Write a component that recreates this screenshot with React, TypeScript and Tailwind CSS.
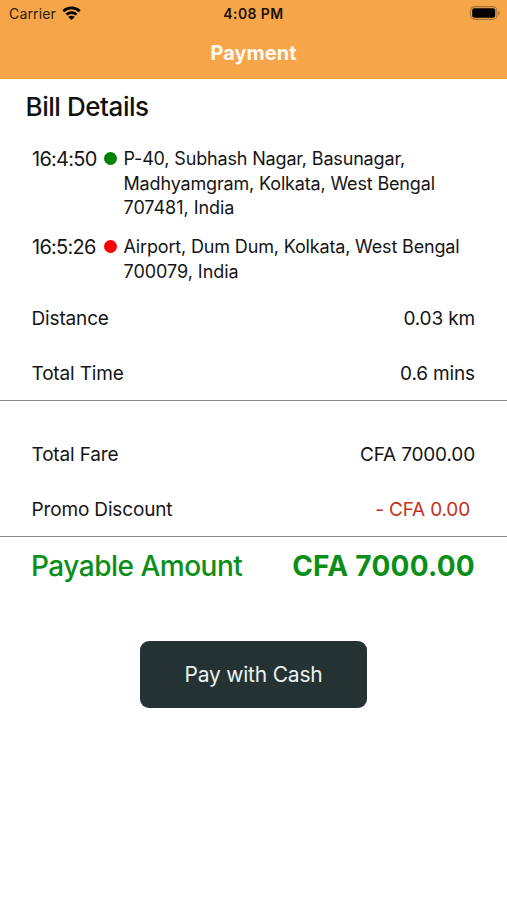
import React from "react";

function StatusBar() {
  return (
    <div className="grid h-7 grid-cols-3 items-center pl-[9px] pr-[7px] text-black">
      <div className="flex items-center gap-[6px]">
        <span className="text-[14px] leading-7 tracking-[0.15px] text-[#2b1c0b]">Carrier</span>
        <svg className="-mt-[2px]" width="19" height="14" viewBox="0 0 19 14" fill="none" stroke="currentColor" strokeWidth="2.7">
          <path d="M1.3 5.2C5.8.7 13.2.7 17.7 5.2" />
          <path d="M4.4 8.5c2.8-2.6 7.4-2.6 10.2 0" />
          <path d="M9.5 14 6.3 10.9c1.8-1.5 4.6-1.5 6.4 0Z" fill="currentColor" stroke="none" />
        </svg>
      </div>
      <span className="-ml-[2px] text-center text-[14px] font-semibold leading-7 tracking-[0.4px] text-[#1a1006]">4:08 PM</span>
      <svg className="-mt-[2px] justify-self-end" width="30" height="14" viewBox="0 0 30 14">
        <rect x="0.6" y="0.6" width="26.3" height="12.8" rx="4" fill="none" stroke="#a87135" strokeWidth="1.1" />
        <rect x="2.2" y="2.2" width="23" height="9.6" rx="2" fill="#000" />
        <path d="M28.2 4.7c2.2.8 2.2 3.8 0 4.6Z" fill="#a87135" />
      </svg>
    </div>
  );
}

type StopProps = { time: string; dot: string; street: string[]; postal: string };

function Stop({ time, dot, street, postal }: StopProps) {
  return (
    <div className="flex text-[18px] leading-[24.5px] tracking-[-0.16px] text-[#151515]">
      <span className="w-[72px] whitespace-nowrap text-[20px] leading-[24px] tracking-[-0.75px]">{time}</span>
      <span className={`mt-[5px] mr-[7px] size-[13px] shrink-0 rounded-full ${dot}`} />
      <div className="-ml-[0.5px] whitespace-nowrap">
        {street.map((line) => (
          <div key={line}>{line}</div>
        ))}
        <div className="tracking-[-0.03px]">{postal}</div>
      </div>
    </div>
  );
}

type RowProps = { label: string; value: string; valueClass?: string };

function Row({ label, value, valueClass = "" }: RowProps) {
  return (
    <div className="flex h-[55px] items-center justify-between pl-[31.5px] pr-[32px] text-[19px] tracking-[-0.15px] text-[#151515]">
      <span>{label}</span>
      <span className={valueClass}>{value}</span>
    </div>
  );
}

export default function App() {
  return (
    <main className="min-h-[900px] w-full bg-white font-['Inter',sans-serif]">
      <header className="h-[79px] bg-[#f6a648]">
        <StatusBar />
        <h1 className="text-center text-[20px] font-bold leading-[50px] text-[#fffaf2]">Payment</h1>
      </header>
      <h2 className="h-[68px] pl-[25.5px] text-[26px] font-medium leading-[56px] tracking-[-0.45px] text-[#111]">Bill Details</h2>
      <section className="flex h-[144px] flex-col gap-[14.5px] pl-8">
        <Stop time="16:4:50" dot="bg-[#008000]" street={["P-40, Subhash Nagar, Basunagar,", "Madhyamgram, Kolkata, West Bengal"]} postal="707481, India" />
        <Stop time="16:5:26" dot="bg-[#ff0000]" street={["Airport, Dum Dum, Kolkata, West Bengal"]} postal="700079, India" />
      </section>
      <section className="h-[110px] border-b border-[#8c8c8c] pt-px">
        <Row label="Distance" value="0.03 km" />
        <Row label="Total Time" value="0.6 mins" />
      </section>
      <section className="h-[136px] border-b border-[#8c8c8c] pt-[27px]">
        <Row label="Total Fare" value="CFA 7000.00" />
        <Row label="Promo Discount" value="- CFA 0.00" valueClass="mr-[5px] text-[#c53120]" />
      </section>
      <section className="flex h-[58px] items-center justify-between pl-[31px] pr-8 text-[28px] text-[#0b8f18]">
        <span className="font-medium tracking-[-0.5px]">Payable Amount</span>
        <span className="font-bold tracking-[0.25px]">CFA 7000.00</span>
      </section>
      <button className="mx-auto mt-[46px] block h-[67px] w-[227px] rounded-[9px] bg-[#253234] text-[21px] tracking-[-0.2px] text-[#e8f2f1]">Pay with Cash</button>
    </main>
  );
}
